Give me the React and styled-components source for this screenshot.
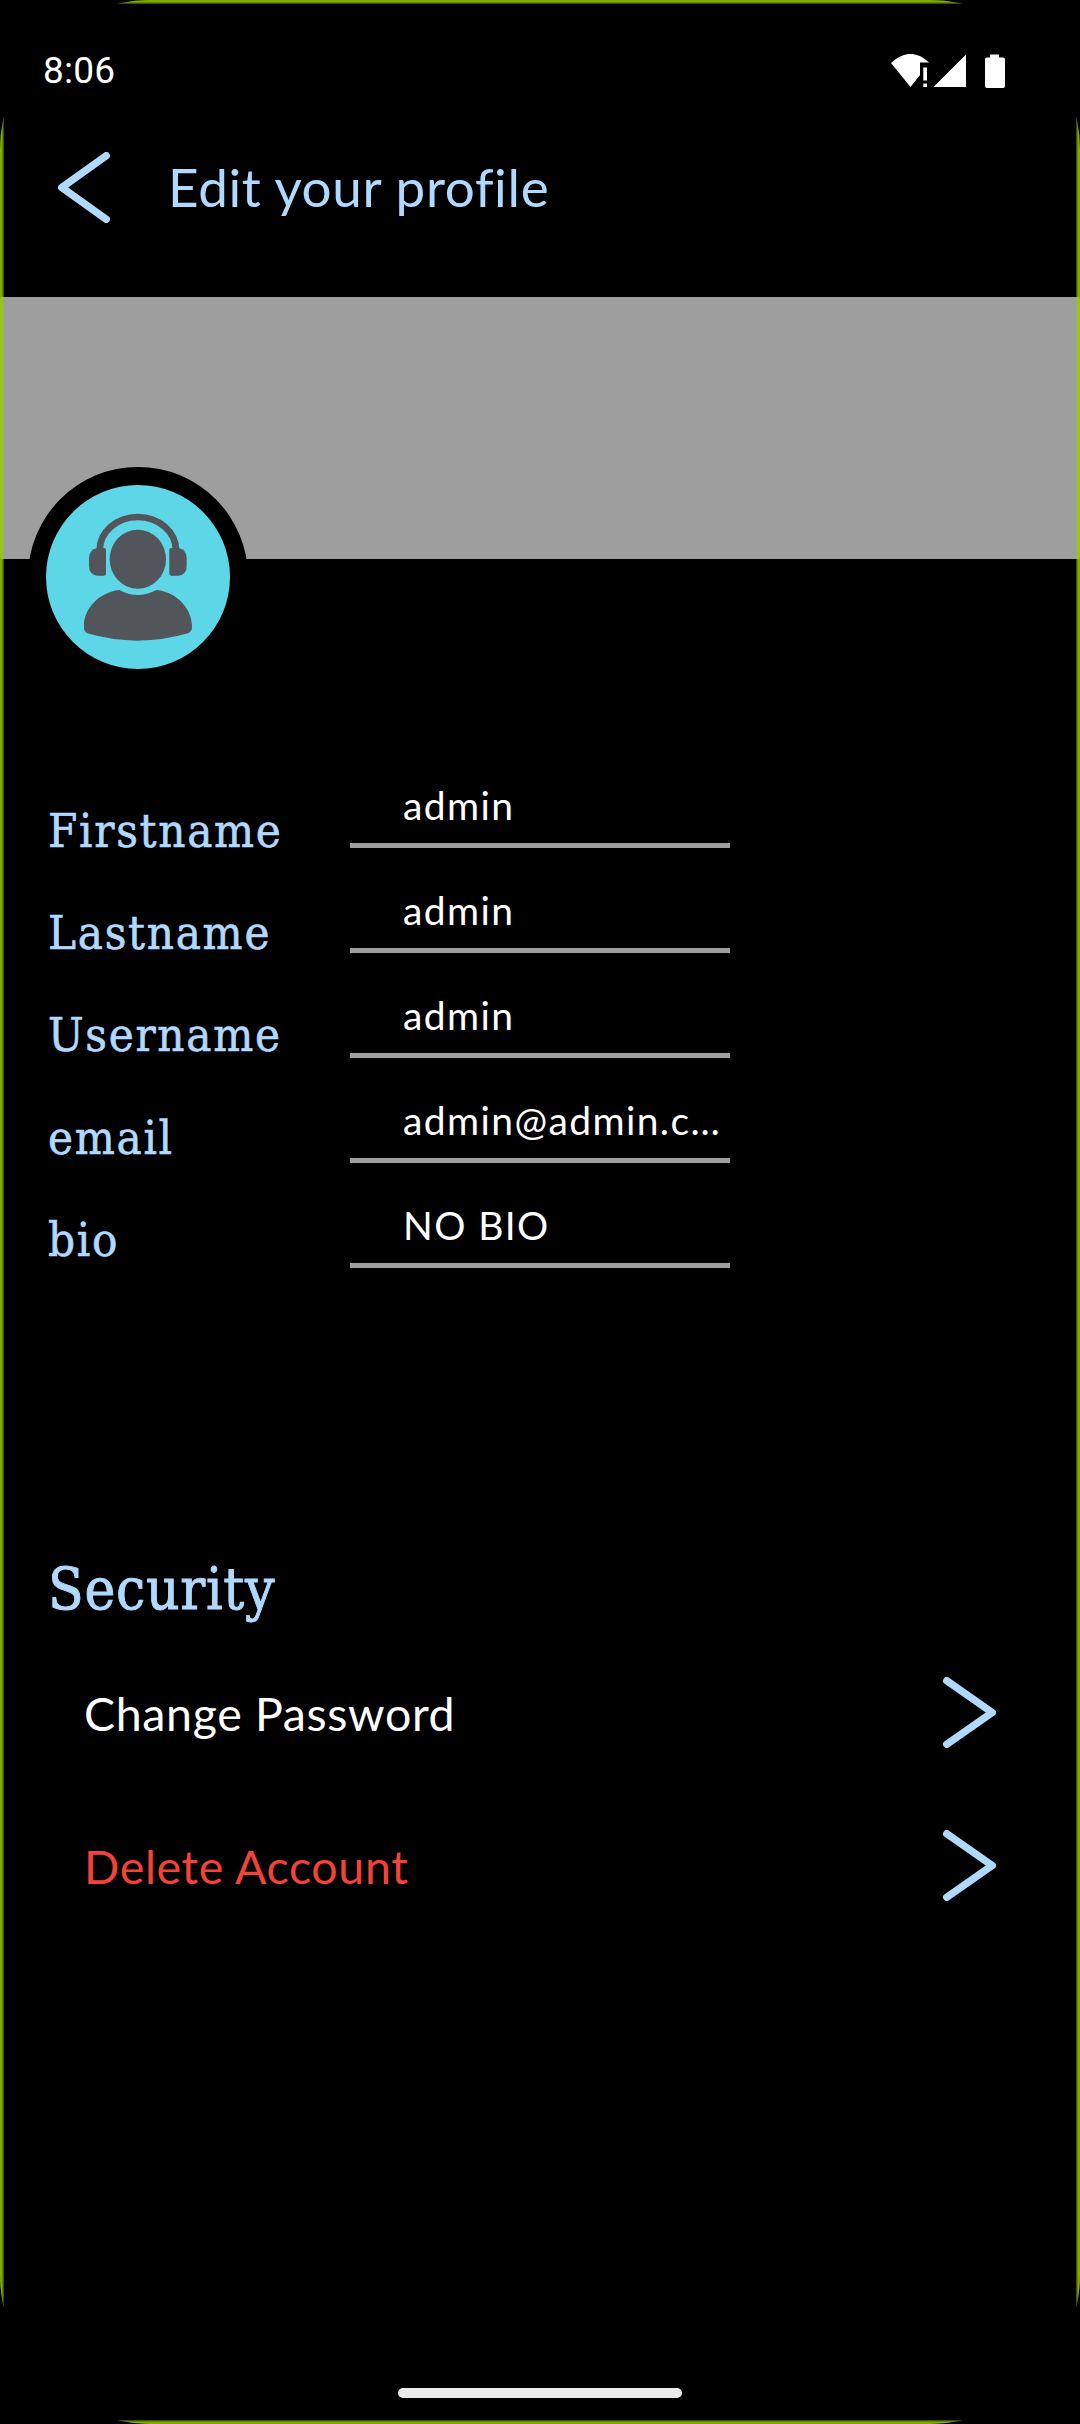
import React from "react";
import styled, { createGlobalStyle } from "styled-components";

const GlobalStyle = createGlobalStyle`
  * { box-sizing: border-box; }
  body { margin: 0; background: #000; }
`;

const accent = "#b0d9ff";
const sans = `Lato, "Liberation Sans", sans-serif`;
const serif = `"DejaVu Serif Condensed", "DejaVu Serif", serif`;

const Screen = styled.div`
  position: relative;
  display: flex;
  flex-direction: column;
  width: 1080px;
  height: 2424px;
  background: #000;
  overflow: hidden;
`;

const EdgeGlow = styled.div`
  position: absolute;
  inset: 0;
  border-radius: 150px;
  overflow: hidden;
  pointer-events: none;
`;

const EdgeLine = styled.div`
  width: 100%;
  height: 100%;
  box-shadow:
    inset 0 0 0 2px rgba(153, 204, 0, 0.5),
    inset 0 0 0 3px rgba(153, 204, 0, 0.45),
    inset 0 0 0 4px rgba(153, 204, 0, 0.4);
`;

const StatusBar = styled.header`
  display: flex;
  justify-content: space-between;
  align-items: center;
  height: 140px;
  padding: 2px 75px 0 43px;
`;

const Clock = styled.span`
  font: 400 37px/44px Roboto, sans-serif;
  letter-spacing: 0.2px;
  color: #fff;
`;

const StatusIcons = styled.svg`
  display: block;
  width: 114px;
  height: 35px;
`;

const TopBar = styled.nav`
  display: flex;
  align-items: center;
  height: 157px;
  padding: 0 0 62px 58px;
`;

const Arrow = styled.svg`
  display: block;
  flex: none;
  width: 53px;
  height: 71px;
  fill: none;
  stroke: ${accent};
  stroke-width: 7.5;
  stroke-linecap: round;
  stroke-linejoin: round;
`;

const Title = styled.h1`
  margin: 0 0 2px 57px;
  font: 400 53px/64px ${sans};
  letter-spacing: 0.65px;
  color: ${accent};
  white-space: nowrap;
`;

const Banner = styled.div`
  height: 262px;
  padding: 170px 0 0 28px;
  background: #9e9e9e;
`;

const AvatarRing = styled.div`
  display: flex;
  width: 220px;
  height: 220px;
  padding: 18px;
  border-radius: 50%;
  background: #000;
`;

const Avatar = styled.svg`
  width: 184px;
  height: 184px;
  border-radius: 50%;
  background: #5dd6e8;
`;

const Profile = styled.section`
  display: flex;
  height: 961px;
  padding: 193px 0 0 48px;
`;

const Labels = styled.div`
  width: 302px;
  padding-top: 25px;
`;

const Label = styled.div`
  height: 102.2px;
  padding-top: 24px;
  font: 400 47px/60px ${serif};
  letter-spacing: 1.7px;
  color: ${accent};
  -webkit-text-stroke: 0.6px ${accent};
  white-space: nowrap;
`;

const Fields = styled.div`
  width: 380px;
`;

const Field = styled.div`
  height: 105px;
  padding: 29px 0 0 53px;
  font: 400 39px/48px ${sans};
  letter-spacing: 1.4px;
  color: #fff;
  white-space: nowrap;

  &::after {
    content: "";
    display: block;
    height: 5px;
    margin: 14px 0 0 -53px;
    background: #9e9e9e;
  }
`;

const Security = styled.section`
  padding: 33px 84px 0 48px;
`;

const SectionTitle = styled.h2`
  margin: 0;
  font: 400 58px/72px ${serif};
  letter-spacing: 0.7px;
  color: ${accent};
  -webkit-text-stroke: 0.9px ${accent};
`;

const Action = styled.div`
  display: flex;
  justify-content: space-between;
  align-items: center;
  height: 153px;
  padding-left: 36px;
`;

const Actions = styled.div`
  padding-top: 11px;
`;

const ActionText = styled.span`
  font: 400 46.5px/56px ${sans};
  letter-spacing: 0.65px;
  color: ${(p) => (p.$danger ? "#f44336" : "#fff")};
`;

const HomeIndicator = styled.div`
  width: 284px;
  height: 10px;
  margin: auto auto 26px;
  border-radius: 5px;
  background: #ebebeb;
`;

const labels = ["Firstname", "Lastname", "Username", "email", "bio"];
const values = ["admin", "admin", "admin", "admin@admin.c…", "NO BIO"];

function ForwardArrow() {
  return (
    <Arrow viewBox="0 0 53 71">
      <path d="M3.8 3.8 L49.2 35.5 L3.8 67.2" />
    </Arrow>
  );
}

export default function App() {
  return (
    <Screen>
      <GlobalStyle />
      <StatusBar>
        <Clock>8:06</Clock>
        <StatusIcons viewBox="0 0 114 35" fill="#fff">
          <path d="M0 9 Q19.5 -9 38 8.5 H29 V21 L19.5 33 Z" />
          <path d="M32.3 13.5 H36 V26.5 H32.3 Z M32.3 29.5 H36 V33 H32.3 Z" />
          <path d="M42.5 33 L75 0.5 V33 Z" />
          <path d="M99 0.5 H108 V3.5 H112 Q114 3.5 114 5.5 V32 Q114 34 112 34 H96 Q94 34 94 32 V5.5 Q94 3.5 96 3.5 H99 Z" />
        </StatusIcons>
      </StatusBar>
      <TopBar>
        <Arrow viewBox="0 0 53 71">
          <path d="M48.2 3.8 L3.8 35.5 L48.2 67.2" />
        </Arrow>
        <Title>Edit your profile</Title>
      </TopBar>
      <Banner>
        <AvatarRing>
          <Avatar viewBox="138 136 552 552" fill="#52555a">
            <path d="M299 332 A114.5 100 0 0 1 528 332" fill="none" stroke="#52555a" strokeWidth="20" />
            <path d="M292 325 H312 Q318 325 318 331 V402 Q318 408 312 408 H292 Q267 404 267 378 V355 Q267 330 292 325 Z" />
            <path d="M536 325 H514 Q508 325 508 331 V402 Q508 408 514 408 H536 Q560 404 560 378 V355 Q560 330 536 325 Z" />
            <ellipse cx="413.5" cy="358.5" rx="84.5" ry="88.5" />
            <path d="M358 451 Q413 481 469 451 C534 458 576 510 576 560 Q577 575 564 581 Q413 625 262 581 Q251 576 252 560 C251 507 297 458 358 451 Z" />
          </Avatar>
        </AvatarRing>
      </Banner>
      <Profile>
        <Labels>
          {labels.map((text) => (
            <Label key={text}>{text}</Label>
          ))}
        </Labels>
        <Fields>
          {values.map((text, i) => (
            <Field key={i}>{text}</Field>
          ))}
        </Fields>
      </Profile>
      <Security>
        <SectionTitle>Security</SectionTitle>
        <Actions>
          <Action>
            <ActionText>Change Password</ActionText>
            <ForwardArrow />
          </Action>
          <Action>
            <ActionText $danger>Delete Account</ActionText>
            <ForwardArrow />
          </Action>
        </Actions>
      </Security>
      <HomeIndicator />
      <EdgeGlow>
        <EdgeLine />
      </EdgeGlow>
    </Screen>
  );
}
